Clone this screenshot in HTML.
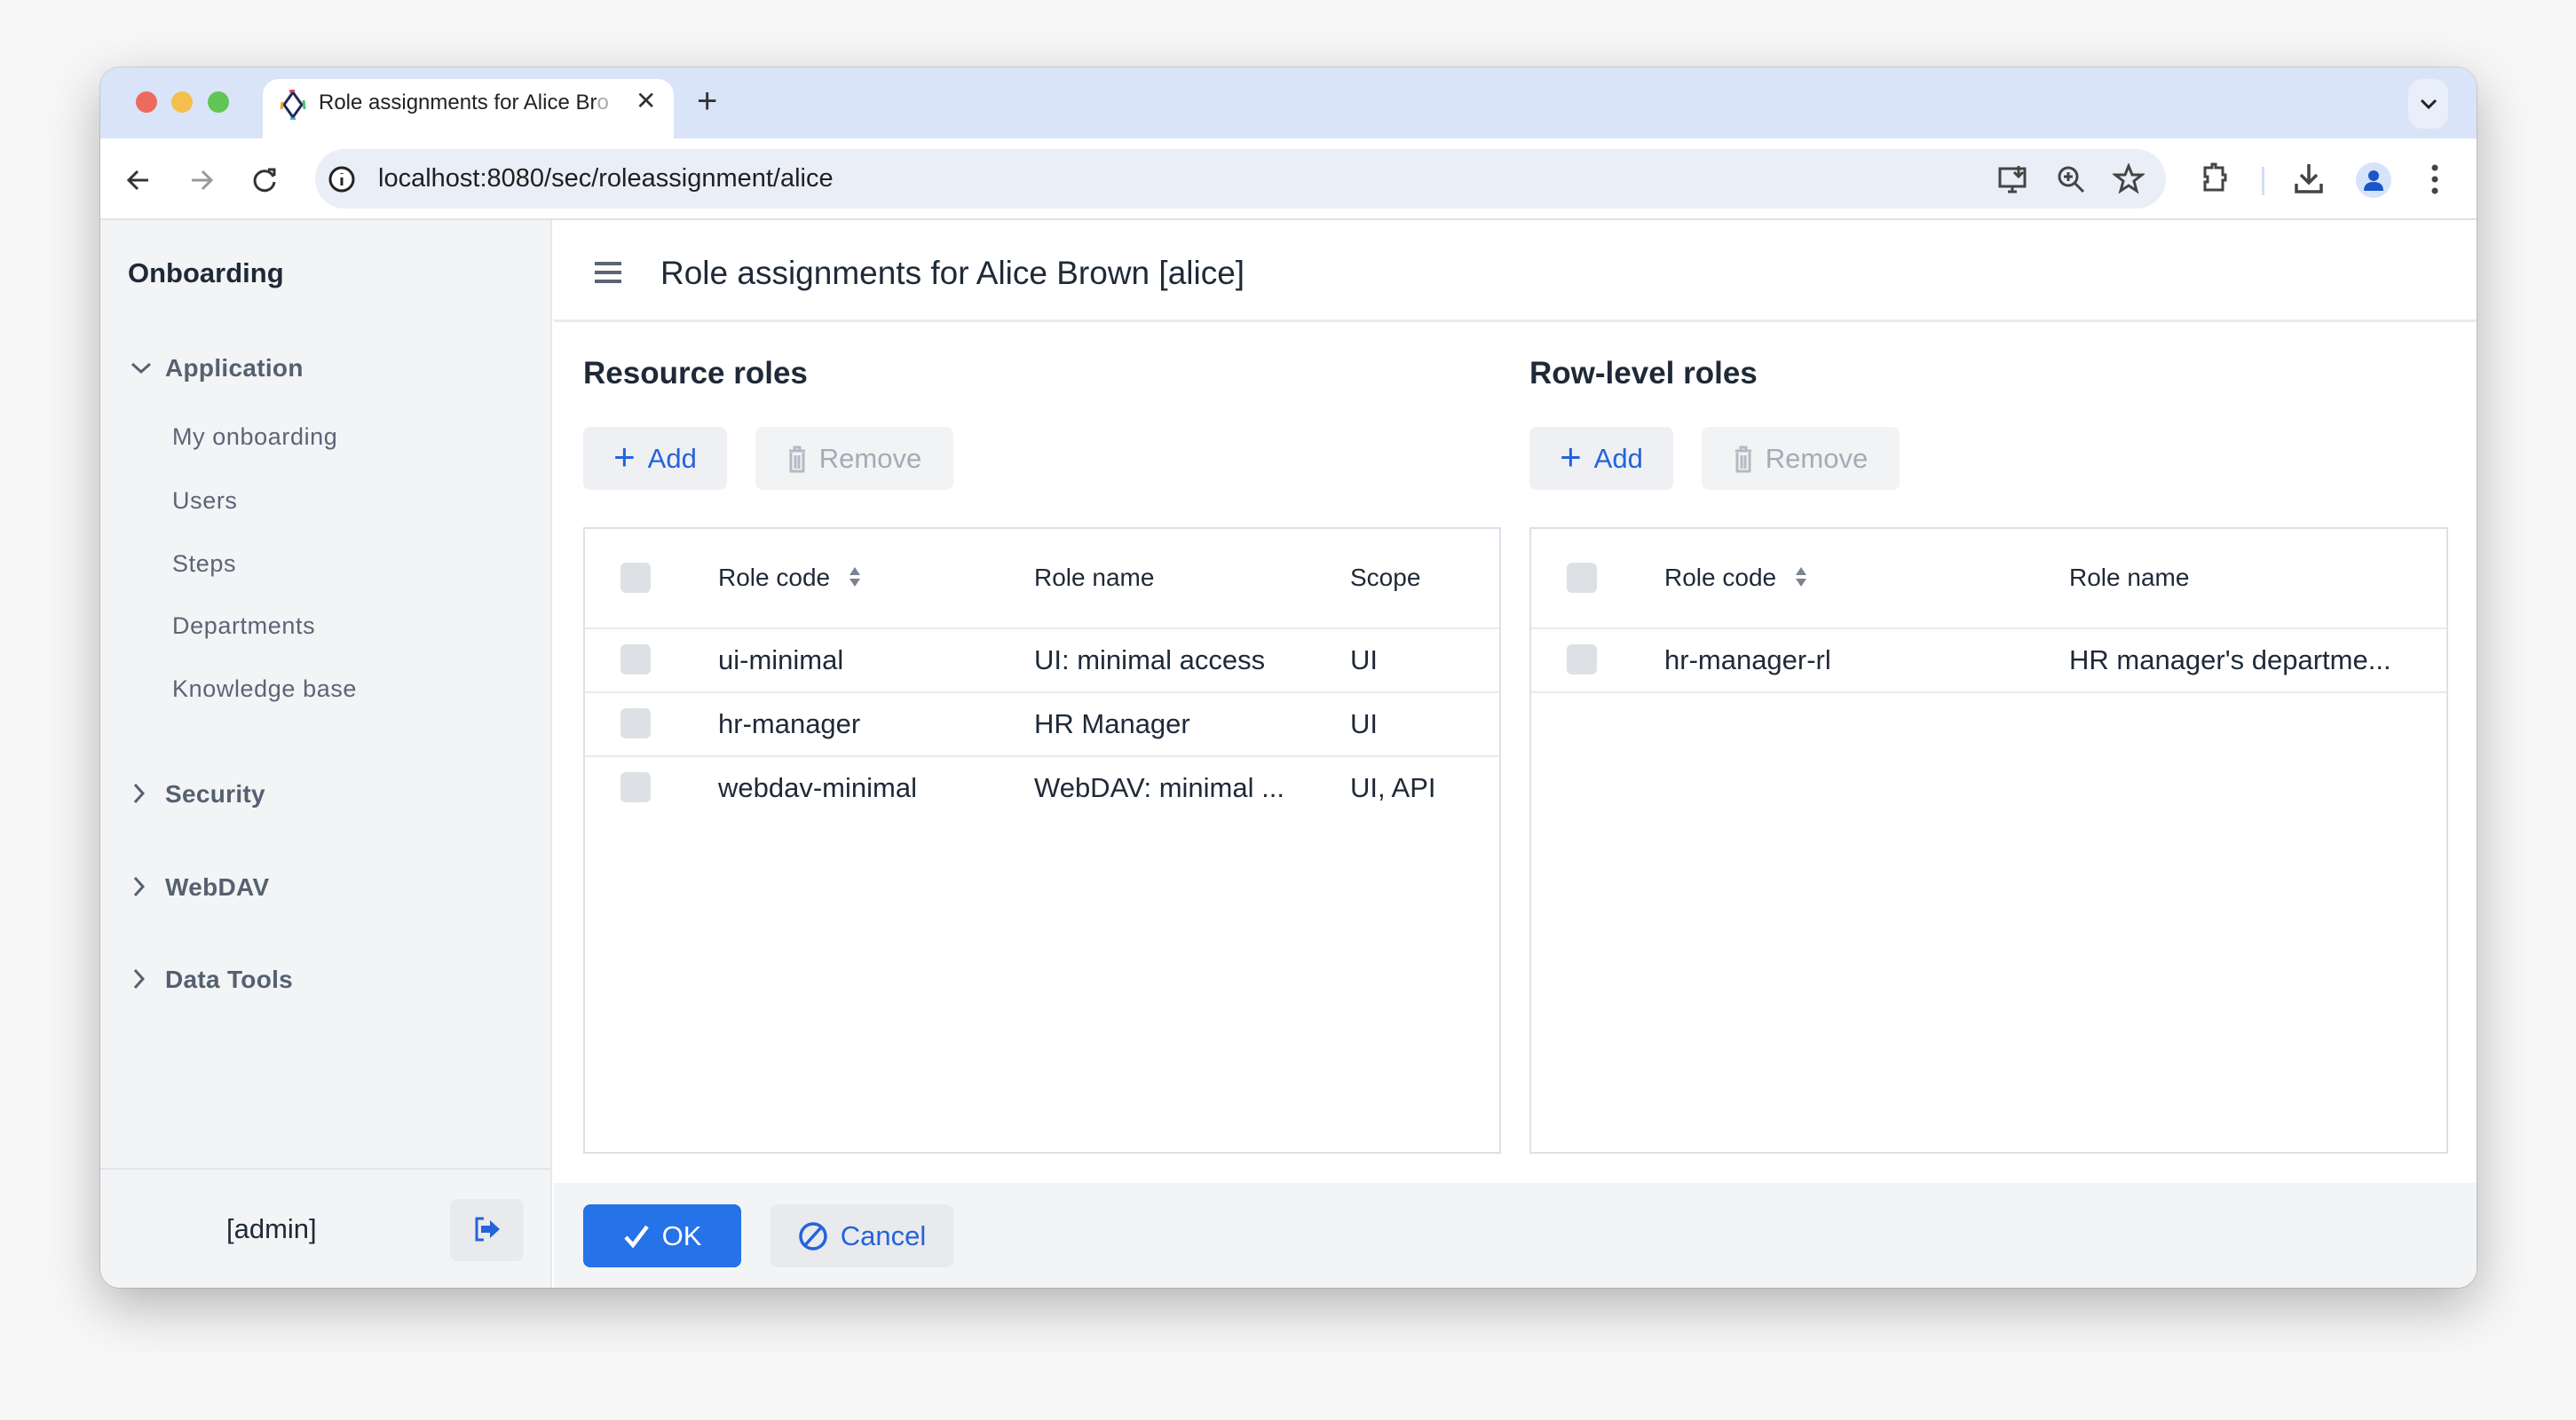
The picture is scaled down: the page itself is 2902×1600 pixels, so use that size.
<!DOCTYPE html>
<html><head><meta charset="utf-8"><style>
*{box-sizing:border-box;margin:0;padding:0}
body{width:2902px;height:1600px;background:#f7f7f7;font-family:"Liberation Sans",Arial,sans-serif;position:relative;overflow:hidden;color:#1f2937}
.a{position:absolute}
.win{left:113px;top:76px;width:2677px;height:1375px;border-radius:22px;background:#fff;overflow:hidden;box-shadow:0 20px 60px rgba(0,0,0,.28),0 0 0 1px rgba(0,0,0,.12)}
.tabbar{left:0;top:0;width:100%;height:80px;background:#d9e4f8}
.dot{width:24px;height:24px;border-radius:50%;top:27px}
.tab{left:183px;top:13px;width:463px;height:70px;background:#fff;border-radius:18px 18px 0 0}
.toolbar{left:0;top:80px;width:100%;height:92px;background:#fff;border-bottom:2px solid #e3e3e3}
.url{left:242px;top:12px;width:2085px;height:67px;border-radius:34px;background:#e9eef7}
.side{left:0;top:172px;width:509px;height:1203px;background:#f3f4f6;border-right:2px solid #e5e7eb}
.main{left:511px;top:172px;width:2166px;height:1203px;background:#fff}
.nav{font-size:28px;font-weight:700;color:#556070;letter-spacing:.3px}
.item{font-size:27px;color:#5b6575;letter-spacing:.6px}
.btn{border-radius:8px;background:#eef0f4;font-size:31px;display:flex;align-items:center;justify-content:center;gap:14px}
.grid{border:2px solid #dde1e7;background:#fff}
.cb{width:34px;height:34px;border-radius:6px;background:#dde0e5}
.cell{font-size:31px;color:#1f2937;white-space:nowrap}
.hd{font-size:28px;color:#1f2937}
.row{left:0;width:100%;border-bottom:2px solid #e8eaee}
</style></head><body>
<div class="a win">
 <div class="a tabbar">
  <div class="a dot" style="left:40px;background:#ed6a5e"></div>
  <div class="a dot" style="left:80px;background:#f5bf4f"></div>
  <div class="a dot" style="left:121px;background:#61c554"></div>
  <div class="a tab">
   <svg class="a" style="left:18px;top:12px" width="32" height="34" viewBox="0 0 32 34"><path d="M16 3 L26 17 L16 31 L6 17 Z" fill="none" stroke="#1e2a5a" stroke-width="3"/><path d="M12 2 L18 1" stroke="#e23d5c" stroke-width="3"/><path d="M4 14 L3 22" stroke="#f0a030" stroke-width="3"/><path d="M28 12 L29 22" stroke="#4cc06a" stroke-width="3"/><path d="M13 33 L19 33" stroke="#33b6e0" stroke-width="3"/></svg>
   <div class="a" style="left:63px;top:13px;font-size:24px;color:#222;white-space:nowrap;width:340px;overflow:hidden">Role assignments for Alice Br<span style="color:#aaa">o</span></div>
   <div class="a" style="left:420px;top:8px;font-size:28px;color:#333">✕</div>
  </div>
  <div class="a" style="left:672px;top:16px;font-size:40px;color:#333;font-weight:300">+</div>
  <div class="a" style="left:2600px;top:13px;width:45px;height:56px;border-radius:16px;background:#e8eefa"></div>
  <svg class="a" style="left:2612px;top:31px" width="22" height="20"><path d="M3 6 L11 14 L19 6" fill="none" stroke="#222" stroke-width="3"/></svg>
 </div>
 <div class="a toolbar">
  <svg class="a" style="left:28px;top:32px" width="30" height="30"><path d="M26 15 H5 M14 5 L4 15 L14 25" fill="none" stroke="#333" stroke-width="3"/></svg>
  <svg class="a" style="left:99px;top:32px" width="30" height="30"><path d="M4 15 H25 M16 5 L26 15 L16 25" fill="none" stroke="#999" stroke-width="3"/></svg>
  <svg class="a" style="left:170px;top:31px" width="32" height="32"><path d="M25 12 A11 11 0 1 0 26 18" fill="none" stroke="#333" stroke-width="3"/><path d="M19 4 L26 4 L26 11" fill="none" stroke="#333" stroke-width="3"/></svg>
  <div class="a url">
   <svg class="a" style="left:14px;top:18px" width="32" height="32"><circle cx="16" cy="16" r="13" fill="#fff" stroke="#222" stroke-width="3"/><path d="M16 14 V23 M16 9 V10" stroke="#222" stroke-width="3"/></svg>
   <div class="a" style="left:71px;top:17px;font-size:29px;color:#1f1f1f">localhost:8080/sec/roleassignment/alice</div>
   <svg class="a" style="left:1895px;top:18px" width="36" height="34"><rect x="3" y="4" width="28" height="20" fill="none" stroke="#444" stroke-width="3"/><path d="M12 30 H22 M17 24 V30" stroke="#444" stroke-width="3"/><path d="M24 1 V12 M19 8 L24 13 L29 8" fill="none" stroke="#444" stroke-width="3"/></svg>
   <svg class="a" style="left:1962px;top:18px" width="34" height="34"><circle cx="13" cy="13" r="10" fill="none" stroke="#444" stroke-width="3"/><path d="M20 20 L30 30 M13 8 V18 M8 13 H18" stroke="#444" stroke-width="3"/></svg>
   <svg class="a" style="left:2025px;top:16px" width="36" height="36"><path d="M18 3 L22 13 L33 13 L24 20 L27 31 L18 25 L9 31 L12 20 L3 13 L14 13 Z" fill="none" stroke="#444" stroke-width="3"/></svg>
  </div>
  <svg class="a" style="left:2367px;top:25px" width="30" height="38"><path d="M4 8 H12 V4 H16 V8 H24 V16 H27 V22 H24 V33 H4 V24 H7 V18 H4 Z" fill="none" stroke="#444" stroke-width="3"/></svg>
  <div class="a" style="left:2435px;top:32px;width:3px;height:32px;background:#d3def5"></div>
  <svg class="a" style="left:2471px;top:27px" width="34" height="36"><path d="M17 2 V23 M8 14 L17 23 L26 14" fill="none" stroke="#444" stroke-width="3.5"/><path d="M3 24 V33 H31 V24" fill="none" stroke="#444" stroke-width="3.5"/></svg>
  <div class="a" style="left:2541px;top:27px;width:40px;height:40px;border-radius:50%;background:#d7e3fb"></div>
  <svg class="a" style="left:2548px;top:33px" width="26" height="28"><circle cx="13" cy="9" r="6" fill="#1a56c8"/><path d="M2 26 Q2 16 13 16 Q24 16 24 26 Z" fill="#1a56c8"/></svg>
  <svg class="a" style="left:2624px;top:26px" width="12" height="40"><circle cx="6" cy="7" r="3.5" fill="#444"/><circle cx="6" cy="20" r="3.5" fill="#444"/><circle cx="6" cy="33" r="3.5" fill="#444"/></svg>
 </div>
 <div class="a side">
  <div class="a" style="left:31px;top:42px;font-size:31px;font-weight:700;color:#1f2937">Onboarding</div>
  <svg class="a" style="left:33px;top:159px" width="26" height="16"><path d="M3 3 L13 12 L23 3" fill="none" stroke="#556070" stroke-width="3"/></svg>
  <div class="a nav" style="left:73px;top:151px">Application</div>
  <div class="a item" style="left:81px;top:229px">My onboarding</div>
  <div class="a item" style="left:81px;top:301px">Users</div>
  <div class="a item" style="left:81px;top:372px">Steps</div>
  <div class="a item" style="left:81px;top:442px">Departments</div>
  <div class="a item" style="left:81px;top:513px">Knowledge base</div>
  <svg class="a" style="left:36px;top:633px" width="16" height="26"><path d="M3 3 L12 13 L3 23" fill="none" stroke="#556070" stroke-width="3"/></svg>
  <div class="a nav" style="left:73px;top:631px">Security</div>
  <svg class="a" style="left:36px;top:738px" width="16" height="26"><path d="M3 3 L12 13 L3 23" fill="none" stroke="#556070" stroke-width="3"/></svg>
  <div class="a nav" style="left:73px;top:736px">WebDAV</div>
  <svg class="a" style="left:36px;top:842px" width="16" height="26"><path d="M3 3 L12 13 L3 23" fill="none" stroke="#556070" stroke-width="3"/></svg>
  <div class="a nav" style="left:73px;top:840px">Data Tools</div>
  <div class="a" style="left:0;top:1068px;width:100%;height:2px;background:#e3e5e9"></div>
  <div class="a" style="left:142px;top:1119px;font-size:31px;color:#1f2937">[admin]</div>
  <div class="a btn" style="left:394px;top:1103px;width:83px;height:70px;background:#e8eaee"></div>
  <svg class="a" style="left:421px;top:1122px" width="32" height="30"><path d="M11 3 H3 V27 H11" fill="none" stroke="#2563d9" stroke-width="3"/><path d="M8 11 H18 V5 L29 15 L18 25 V19 H8 Z" fill="#2563d9"/></svg>
 </div>
 <div class="a main">
  <div class="a" style="left:0;top:0;width:100%;height:115px;border-bottom:3px solid #e8eaee"></div>
  <svg class="a" style="left:44px;top:45px" width="34" height="28"><path d="M2 4 H32 M2 14 H32 M2 24 H32" stroke="#5b6575" stroke-width="4"/></svg>
  <div class="a" style="left:120px;top:39px;font-size:37px;font-weight:500;color:#1f2937">Role assignments for Alice Brown [alice]</div>

  <div class="a" style="left:33px;top:153px;font-size:35px;font-weight:600;color:#1f2937">Resource roles</div>
  <div class="a btn" style="left:33px;top:233px;width:162px;height:71px;color:#2563d9"><span style="font-size:42px;font-weight:300;margin-top:-4px">+</span>Add</div>
  <div class="a btn" style="left:227px;top:233px;width:223px;height:71px;color:#a4abb6;background:#f2f3f5"><svg width="22" height="32"><path d="M2 7 H20 M8 7 V3 H14 V7 M4 9 V30 H18 V9 M9 12 V27 M13 12 V27" fill="none" stroke="#b4bac3" stroke-width="3"/></svg>Remove</div>
  <div class="a grid" style="left:33px;top:346px;width:1034px;height:706px">
   <div class="a row" style="top:0;height:113px"></div>
   <div class="a cb" style="left:40px;top:38px"></div>
   <div class="a hd" style="left:150px;top:39px">Role code</div>
   <svg class="a" style="left:296px;top:41px" width="16" height="26"><path d="M8 2 L14 11 H2 Z M8 24 L14 15 H2 Z" fill="#7b8390"/></svg>
   <div class="a hd" style="left:506px;top:39px">Role name</div>
   <div class="a hd" style="left:862px;top:39px">Scope</div>
   <div class="a row" style="top:113px;height:72px"></div>
   <div class="a row" style="top:185px;height:72px"></div>
   <div class="a cb" style="left:40px;top:130px"></div><div class="a cell" style="left:150px;top:130px">ui-minimal</div><div class="a cell" style="left:506px;top:130px">UI: minimal access</div><div class="a cell" style="left:862px;top:130px">UI</div>
   <div class="a cb" style="left:40px;top:202px"></div><div class="a cell" style="left:150px;top:202px">hr-manager</div><div class="a cell" style="left:506px;top:202px">HR Manager</div><div class="a cell" style="left:862px;top:202px">UI</div>
   <div class="a cb" style="left:40px;top:274px"></div><div class="a cell" style="left:150px;top:274px">webdav-minimal</div><div class="a cell" style="left:506px;top:274px">WebDAV: minimal ...</div><div class="a cell" style="left:862px;top:274px">UI, API</div>
  </div>

  <div class="a" style="left:1099px;top:153px;font-size:35px;font-weight:600;color:#1f2937">Row-level roles</div>
  <div class="a btn" style="left:1099px;top:233px;width:162px;height:71px;color:#2563d9"><span style="font-size:42px;font-weight:300;margin-top:-4px">+</span>Add</div>
  <div class="a btn" style="left:1293px;top:233px;width:223px;height:71px;color:#a4abb6;background:#f2f3f5"><svg width="22" height="32"><path d="M2 7 H20 M8 7 V3 H14 V7 M4 9 V30 H18 V9 M9 12 V27 M13 12 V27" fill="none" stroke="#b4bac3" stroke-width="3"/></svg>Remove</div>
  <div class="a grid" style="left:1099px;top:346px;width:1035px;height:706px">
   <div class="a row" style="top:0;height:113px"></div>
   <div class="a cb" style="left:40px;top:38px"></div>
   <div class="a hd" style="left:150px;top:39px">Role code</div>
   <svg class="a" style="left:296px;top:41px" width="16" height="26"><path d="M8 2 L14 11 H2 Z M8 24 L14 15 H2 Z" fill="#7b8390"/></svg>
   <div class="a hd" style="left:606px;top:39px">Role name</div>
   <div class="a row" style="top:113px;height:72px"></div>
   <div class="a cb" style="left:40px;top:130px"></div><div class="a cell" style="left:150px;top:130px">hr-manager-rl</div><div class="a cell" style="left:606px;top:130px">HR manager's departme...</div>
  </div>

  <div class="a" style="left:0;top:1085px;width:100%;height:118px;background:#f3f4f6"></div>
  <div class="a btn" style="left:33px;top:1109px;width:178px;height:71px;background:#2672e8;color:#fff"><svg width="30" height="28"><path d="M3 15 L11 24 L27 3" fill="none" stroke="#fff" stroke-width="4.5"/></svg>OK</div>
  <div class="a btn" style="left:244px;top:1109px;width:206px;height:71px;background:#e8eaee;color:#2563d9"><svg width="34" height="34"><circle cx="17" cy="17" r="14" fill="none" stroke="#2563d9" stroke-width="3.5"/><path d="M8 27 L26 7" stroke="#2563d9" stroke-width="3.5"/></svg>Cancel</div>
 </div>
</div>
</body></html>
